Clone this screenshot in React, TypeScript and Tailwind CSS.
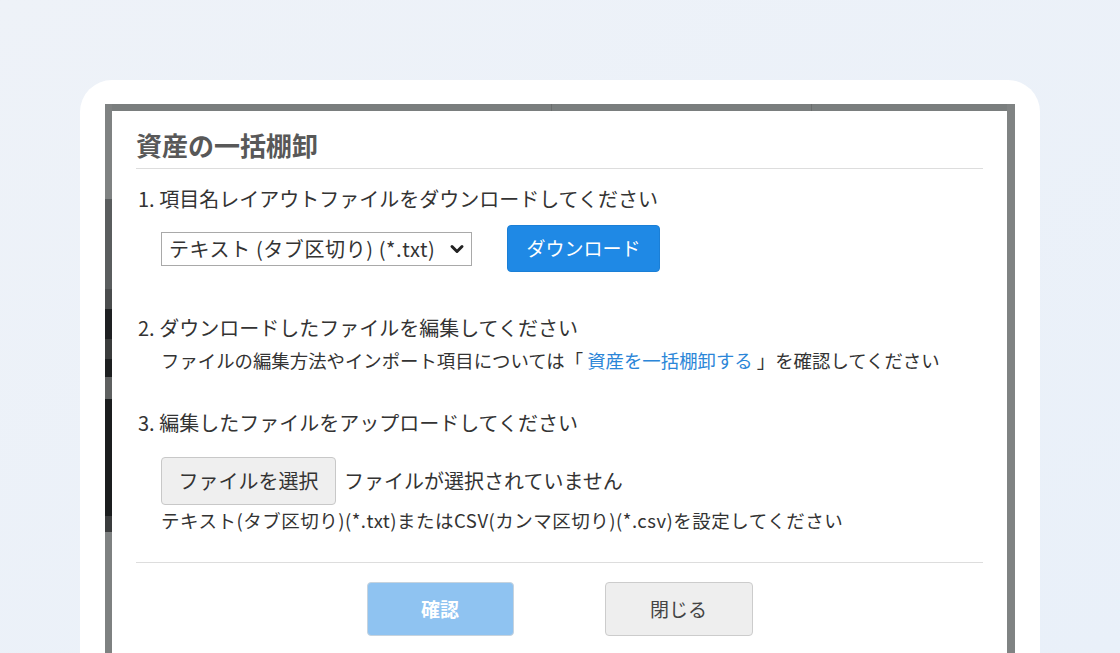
import { ChevronDown } from 'lucide-react';

const leftStrip = [
  { h: 'h-[95px]', c: 'bg-[#7f8282]' },
  { h: 'h-[90px]', c: 'bg-[#5a5d5e]' },
  { h: 'h-[20px]', c: 'bg-[#4a4c4d]' },
  { h: 'h-[30px]', c: 'bg-[#1e2022]' },
  { h: 'h-[20px]', c: 'bg-[#3a3c3c]' },
  { h: 'h-[18px]', c: 'bg-[#1d1f20]' },
  { h: 'h-[22px]', c: 'bg-[#5e6060]' },
  { h: 'h-[117px]', c: 'bg-[#1b1d1e]' },
  { h: 'h-[16px]', c: 'bg-[#3a3c3d]' },
  { h: 'flex-1', c: 'bg-[#7e8181]' }
];

function Backdrop({ children }: { children: React.ReactNode }) {
  return (
    <div className="flex h-full">
      <div className="flex w-[7px] flex-col">
        {leftStrip.map((s, i) => (
          <div key={i} className={`${s.h} ${s.c}`} />
        ))}
      </div>
      <div className="flex w-[895px] flex-col">
        <div className="flex h-[7px] bg-[#7a7e7e]">
          <div className="w-[440px] border-r border-[#6b6e6e]" />
          <div className="w-[260px] border-r border-[#6b6e6e]" />
          <div className="flex-1" />
        </div>
        {children}
      </div>
      <div className="w-[8px] bg-[#808383]" />
    </div>
  );
}

export default function App() {
  return (
    <div className="h-[653px] overflow-hidden bg-gradient-to-br from-[#eef2f8] to-[#e9f0f9] px-[80px] pt-[80px] font-['Noto_Sans_CJK_JP','Noto_Sans',sans-serif]">
      <div className="h-[620px] rounded-t-[32px] bg-white px-[25px] pt-[24px]">
        <Backdrop>
          <div className="flex-1 bg-white px-[24px] text-[#333]">
            <div className="border-b border-[#dddddd] pb-[6px] pt-[17px] text-[26px] font-bold leading-[34px] text-[#585858]">
              資産の一括棚卸
            </div>

            <div className="mt-[16px] pl-[2px] text-[20px] leading-[28px]">
              1. 項目名レイアウトファイルをダウンロードしてください
            </div>

            <div className="mt-[12px] flex items-center gap-[35px] pl-[25px]">
              <div className="flex h-[34px] w-[311px] items-center justify-between border border-[#a9a9a9] pl-[7px] pr-[4px] text-[20px] tracking-[0.6px] text-[#333]">
                <span>テキスト (タブ区切り) (*.txt)</span>
                <ChevronDown className="h-[20px] w-[20px] text-[#222]" strokeWidth={3.6} />
              </div>
              <button
                type="button"
                className="flex h-[47px] w-[153px] items-center justify-center rounded-[4px] border border-[#1b7fd6] bg-[#1f89e5] text-[19px] text-white"
              >
                ダウンロード
              </button>
            </div>

            <div className="mt-[42px] pl-[2px] text-[20px] leading-[28px]">
              2. ダウンロードしたファイルを編集してください
            </div>
            <div className="mt-[4px] pl-[25px] text-[18.4px] leading-[28px]">
              ファイルの編集方法やインポート項目については「 <span className="text-[#2b86d8]">資産を一括棚卸する</span> 」を確認してください
            </div>

            <div className="mt-[35px] pl-[2px] text-[20px] leading-[28px]">
              3. 編集したファイルをアップロードしてください
            </div>

            <div className="mt-[20px] flex items-center gap-[8px] pl-[25px]">
              <button
                type="button"
                className="flex h-[48px] w-[175px] items-center justify-center rounded-[4px] border border-[#c8c8c8] bg-[#efefef] text-[20px] text-[#333]"
              >
                ファイルを選択
              </button>
              <span className="text-[20px]">ファイルが選択されていません</span>
            </div>
            <div className="mt-[2px] pl-[25px] text-[18.5px] leading-[26px] tracking-[0.5px]">
              テキスト(タブ区切り)(*.txt)またはCSV(カンマ区切り)(*.csv)を設定してください
            </div>

            <div className="mt-[29px] border-t border-[#dddddd]" />

            <div className="mt-[19px] flex justify-center gap-[91px]">
              <button
                type="button"
                className="flex h-[54px] w-[147px] items-center justify-center rounded-[4px] border border-[#c6d3de] bg-[#8fc3f1] text-[19px] font-bold text-white"
              >
                確認
              </button>
              <button
                type="button"
                className="flex h-[54px] w-[148px] items-center justify-center rounded-[4px] border border-[#cccccc] bg-[#eeeeee] text-[19px] text-[#444]"
              >
                閉じる
              </button>
            </div>
          </div>
        </Backdrop>
      </div>
    </div>
  );
}
